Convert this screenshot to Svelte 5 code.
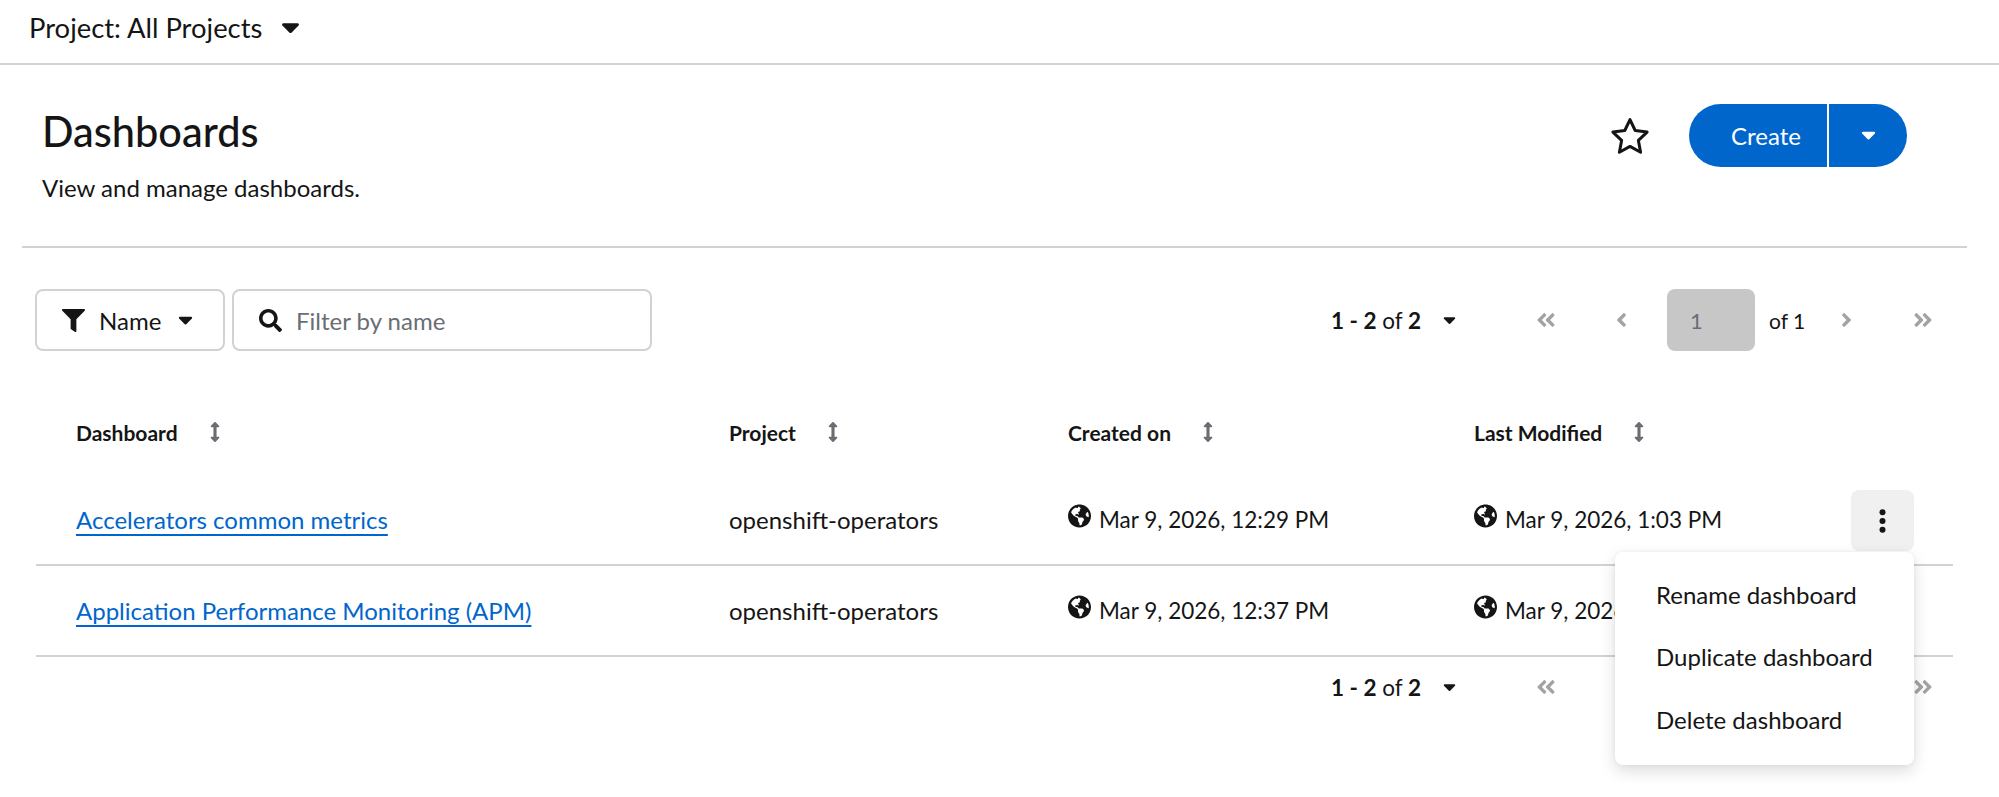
<script lang="ts">
  const globe = "M248 8C111.03 8 0 119.03 0 256s111.03 248 248 248 248-111.03 248-248S384.97 8 248 8zm82.29 357.6c-3.9 3.88-7.99 7.95-11.31 11.28-2.99 3-5.1 6.7-6.17 10.71-1.51 5.66-2.73 11.38-4.77 16.87l-17.39 46.85c-13.76 3-28 4.69-42.65 4.69v-27.38c1.69-12.62-7.64-36.26-22.63-51.25-6-6-9.37-14.14-9.37-22.63v-32.01c0-11.64-6.27-22.34-16.46-27.97-14.37-7.95-34.81-19.06-48.81-26.11-11.48-5.78-22.1-13.14-31.65-21.75l-.8-.72a114.792 114.792 0 0 1-18.06-20.74c-9.38-13.77-24.66-36.42-34.59-51.14 20.47-45.5 57.36-82.04 103.2-101.89l24.01 12.01C203.48 89.74 216 82.01 216 70.11v-11.3c7.99-1.29 16.12-2.11 24.45-2.42l28.3 28.3c6.25 6.25 6.25 16.38 0 22.63L264 112l-10.34 10.34c-3.12 3.12-3.12 8.19 0 11.31l4.69 4.69c3.12 3.12 3.12 8.19 0 11.31l-8 8a8.008 8.008 0 0 1-5.66 2.34h-8.99c-2.08 0-4.08.81-5.58 2.27l-9.92 9.65a8.008 8.008 0 0 0-1.58 9.31l15.59 31.19c2.66 5.32-1.21 11.58-7.15 11.58h-5.64c-1.93 0-3.79-.7-5.24-1.96l-9.28-8.06a16.017 16.017 0 0 0-15.55-3.1l-31.17 10.39a11.95 11.95 0 0 0-8.17 11.34c0 4.53 2.56 8.66 6.61 10.69l11.08 5.54c9.41 4.71 19.79 7.16 30.31 7.16s22.59 27.29 32 32h66.75c8.49 0 16.62 3.37 22.63 9.37l13.69 13.69a30.503 30.503 0 0 1 8.93 21.57 46.536 46.536 0 0 1-13.72 32.98zM417 274.25c-5.79-1.45-10.84-5-14.15-9.97l-17.98-26.97a23.97 23.97 0 0 1 0-26.62l19.59-29.38c2.32-3.47 5.5-6.29 9.24-8.15l12.98-6.49C440.2 193.59 448 223.87 448 256c0 8.67-.74 17.16-1.82 25.54L417 274.25z";
  const sortPath = "M214.059 377.941H168V134.059h46.059c21.382 0 32.09-25.851 16.971-40.971L144.971 7.029c-9.373-9.373-24.568-9.373-33.941 0L24.971 93.088c-15.119 15.119-4.411 40.971 16.971 40.971H88v243.882H41.941c-21.382 0-32.09 25.851-16.971 40.971l86.059 86.059c9.373 9.373 24.568 9.373 33.941 0l86.059-86.059c15.12-15.119 4.412-40.971-16.97-40.971z";
  const angle = "M31.7 239l136-136c9.4-9.4 24.6-9.4 33.9 0l22.6 22.6c9.4 9.4 9.4 24.6 0 33.9L127.9 256l96.4 96.4c9.4 9.4 9.4 24.6 0 33.9L201.7 409c-9.4 9.4-24.6 9.4-33.9 0l-136-136c-9.5-9.4-9.5-24.6-.1-34z";
  const angleDouble = "M223.7 239l136-136c9.4-9.4 24.6-9.4 33.9 0l22.6 22.6c9.4 9.4 9.4 24.6 0 33.9L319.9 256l96.4 96.4c9.4 9.4 9.4 24.6 0 33.9L393.7 409c-9.4 9.4-24.6 9.4-33.9 0l-136-136c-9.5-9.4-9.5-24.6-.1-34zm-192 34l136 136c9.4 9.4 24.6 9.4 33.9 0l22.6-22.6c9.4-9.4 9.4-24.6 0-33.9L127.9 256l96.4-96.4c9.4-9.4 9.4-24.6 0-33.9L201.7 103c-9.4-9.4-24.6-9.4-33.9 0l-136 136c-9.5 9.4-9.5 24.6-.1 34z";

  const columns = ["Dashboard", "Project", "Created on", "Last Modified"];
  const rows = [
    { name: "Accelerators common metrics", project: "openshift-operators", created: "Mar 9, 2026, 12:29 PM", modified: "Mar 9, 2026, 1:03 PM", menu: true },
    { name: "Application Performance Monitoring (APM)", project: "openshift-operators", created: "Mar 9, 2026, 12:37 PM", modified: "Mar 9, 2026, 1:03 PM", menu: false }
  ];
  const menuItems = ["Rename dashboard", "Duplicate dashboard", "Delete dashboard"];
</script>

{#snippet caret(cls)}
  <svg class="caret {cls}" viewBox="0 0 20 12"><path d="M2.5 1h15c1.2 0 1.8 1.4 1 2.3l-7.5 7.6c-.6.6-1.4.6-2 0L1.500 3.300C.7 2.400 1.300 1 2.500 1z" /></svg>
{/snippet}

{#snippet pagination(full)}
  <div class="pager">
    <span class="range"><b>1 - 2</b> of <b>2</b></span>
    {@render caret("caret-range")}
    <svg class="dbl first" viewBox="0 0 448 512"><path d={angleDouble} /></svg>
    <svg class="single prev" viewBox="0 0 256 512"><path d={angle} /></svg>
    {#if full}
      <span class="page-box">1</span>
      <span class="page-of">of 1</span>
    {:else}
      <span class="page-gap"></span>
    {/if}
    <svg class="single next flip" viewBox="0 0 256 512"><path d={angle} /></svg>
    <svg class="dbl last flip" viewBox="0 0 448 512"><path d={angleDouble} /></svg>
  </div>
{/snippet}

<div class="page">
  <header class="topbar">
    <span>Project: All Projects</span>
    {@render caret("caret-top")}
  </header>

  <section class="heading">
    <div>
      <h1>Dashboards</h1>
      <p>View and manage dashboards.</p>
    </div>
    <div class="actions">
      <svg class="star" viewBox="0 0 40 38"><path d="M20 2.600l5.200 10.900 11.900 1.600-8.700 8.300 2.200 11.800L20 29.400 9.400 35.200l2.200-11.800-8.700-8.300 11.900-1.600z" /></svg>
      <div class="create">
        <span class="create-main">Create</span>
        <span class="create-toggle">{@render caret("caret-white")}</span>
      </div>
    </div>
  </section>

  <div class="divider"></div>

  <div class="toolbar">
    <div class="filter-select">
      <svg class="icon-filter" viewBox="0 0 512 512"><path d="M487.976 0H24.028C2.71 0-8.047 25.866 7.058 40.971L192 225.941V432c0 7.831 3.821 15.17 10.237 19.662l80 55.98C298.02 518.69 320 507.493 320 487.98V225.941l184.947-184.97C520.021 25.896 509.338 0 487.976 0z" /></svg>
      <span>Name</span>
      {@render caret("caret-name")}
    </div>
    <div class="search">
      <svg class="icon-search" viewBox="0 0 512 512"><path d="M505 442.700L405.300 343c-4.500-4.500-10.600-7-17-7H372c27.600-35.300 44-79.700 44-128C416 93.100 322.900 0 208 0S0 93.100 0 208s93.100 208 208 208c48.300 0 92.700-16.400 128-44v16.300c0 6.400 2.500 12.500 7 17l99.700 99.700c9.400 9.400 24.600 9.400 33.900 0l28.300-28.300c9.400-9.400 9.400-24.600.1-34zM208 336c-70.700 0-128-57.200-128-128 0-70.700 57.200-128 128-128 70.700 0 128 57.200 128 128 0 70.700-57.200 128-128 128z" /></svg>
      <span>Filter by name</span>
    </div>
    {@render pagination(true)}
  </div>

  <div class="table">
    <div class="row head">
      {#each columns as col}
        <div class="th">
          <span>{col}</span>
          <svg class="sort" viewBox="0 0 256 512"><path d={sortPath} /></svg>
        </div>
      {/each}
    </div>
    {#each rows as row}
      <div class="row body">
        <a class="link" href="#top">{row.name}</a>
        <span>{row.project}</span>
        <span class="date"><svg class="globe" viewBox="0 0 496 512"><path d={globe} /></svg>{row.created}</span>
        <span class="date"><svg class="globe" viewBox="0 0 496 512"><path d={globe} /></svg>{row.modified}</span>
        {#if row.menu}
          <div class="kebab-cell">
            <div class="kebab">
              <svg viewBox="0 0 12 36"><circle cx="6" cy="5" r="4.500" /><circle cx="6" cy="18" r="4.500" /><circle cx="6" cy="31" r="4.500" /></svg>
            </div>
            <ul class="menu">
              {#each menuItems as item}
                <li>{item}</li>
              {/each}
            </ul>
          </div>
        {/if}
      </div>
    {/each}
  </div>

  <div class="bottom">
    {@render pagination(false)}
  </div>
</div>

<style>
  :global(body) {
    margin: 0;
    background: #fff;
  }
  .page {
    width: 1999px;
    height: 797px;
    overflow: hidden;
    font-family: "Lato", "Open Sans", sans-serif;
    font-size: 24px;
    color: #151515;
  }
  .topbar {
    height: 65px;
    box-sizing: border-box;
    border-bottom: 2px solid #d2d2d2;
    padding: 0 0 8px 29px;
    display: flex;
    align-items: center;
    font-size: 27.4px;
  }
  .caret { fill: currentColor; display: block; }
  .caret-top { width: 19px; height: 12px; margin-left: 19px; }
  .heading {
    height: 181px;
    display: flex;
    justify-content: space-between;
    padding: 0 92px 0 42px;
    box-sizing: border-box;
  }
  h1 {
    margin: 42px 0 0;
    font-size: 41.5px;
    line-height: 48px;
    font-weight: 500;
  }
  .heading p {
    margin: 18px 0 0;
    font-size: 24px;
    line-height: 30px;
  }
  .actions {
    display: flex;
    align-items: flex-start;
    margin-top: 39px;
  }
  .star {
    width: 40px;
    height: 38px;
    margin: 13px 39px 0 0;
    fill: none;
    stroke: #151515;
    stroke-width: 3;
    stroke-linejoin: round;
  }
  .create {
    width: 218px;
    height: 63px;
    display: flex;
    background: #0066cc;
    border-radius: 32px;
    color: #fff;
    font-size: 24px;
  }
  .create-main {
    flex: 1;
    display: flex;
    align-items: center;
    justify-content: center;
    padding-left: 16px;
    border-right: 2px solid #fff;
  }
  .create-toggle {
    width: 78px;
    display: flex;
    align-items: center;
    justify-content: center;
    box-sizing: border-box;
  }
  .caret-white { width: 15px; height: 9px; color: #fff; }
  .divider {
    height: 2px;
    background: #d2d2d2;
    margin: 0 32px 0 22px;
  }
  .toolbar {
    display: flex;
    align-items: center;
    margin: 41px 0 0 35px;
    height: 62px;
  }
  .filter-select, .search {
    height: 62px;
    box-sizing: border-box;
    border: 2px solid #d2d2d2;
    border-radius: 8px;
    display: flex;
    align-items: center;
    flex: none;
  }
  .filter-select {
    width: 190px;
    padding-left: 25px;
  }
  .icon-filter { width: 23px; height: 23px; fill: #151515; margin-right: 14px; }
  .caret-name { width: 15px; height: 9px; margin-left: 17px; }
  .search {
    width: 420px;
    margin-left: 7px;
    padding-left: 25px;
    color: #6a6e73;
  }
  .icon-search { width: 23px; height: 23px; fill: #151515; margin-right: 14px; }
  .pager {
    display: flex;
    align-items: center;
    margin-left: auto;
    width: 602px;
    flex: none;
    color: #151515;
    margin-right: 66px;
    box-sizing: border-box;
    font-size: 22px;
  }
  .range { width: 94px; flex: none; white-space: nowrap; font-size: 22.5px; }
  .range b { font-weight: 700; }
  .caret-range { width: 15px; height: 9px; margin-left: 18px; }
  .dbl { width: 20px; height: 22px; fill: #a3a3a3; flex: none; }
  .single { width: 11px; height: 22px; fill: #a3a3a3; flex: none; }
  .flip { transform: scaleX(-1); }
  .first { margin-left: 80px; }
  .prev { margin-left: 60px; }
  .page-box {
    width: 88px;
    height: 62px;
    flex: none;
    box-sizing: border-box;
    padding-left: 23px;
    margin-left: 40px;
    background: #c7c7c7;
    border-radius: 8px;
    display: flex;
    align-items: center;
    color: #6a6e73;
  }
  .page-of { margin-left: 14px; width: 37px; flex: none; white-space: nowrap; font-size: 21px; }
  .page-gap { width: 179px; flex: none; }
  .next { margin-left: 35px; }
  .last { margin-left: 61px; }
  .table {
    margin: 38px 46px 0 36px;
    position: relative;
  }
  .row {
    display: grid;
    grid-template-columns: 653px 339px 406px 1fr;
    padding-left: 40px;
    align-items: center;
  }
  .head {
    height: 86px;
    font-size: 21px;
    font-weight: 700;
  }
  .th { display: flex; align-items: center; gap: 32px; }
  .sort { width: 10px; height: 20px; fill: #6a6e73; }
  .body {
    height: 91px;
    box-sizing: border-box;
    border-bottom: 2px solid #d2d2d2;
    position: relative;
  }
  .link {
    color: #0066cc;
    text-decoration: underline;
    text-decoration-thickness: 2px;
    text-underline-offset: 5px;
    justify-self: start;
  }
  .date {
    display: flex;
    align-items: center;
    gap: 8px;
    font-size: 22.5px;
    white-space: nowrap;
  }
  .globe { width: 23px; height: 24px; fill: #151515; margin-bottom: 8px; flex: none; }
  .kebab-cell {
    position: absolute;
    right: 39px;
    top: 15px;
  }
  .kebab {
    width: 63px;
    height: 61px;
    background: #f0f0f0;
    border-radius: 8px;
    display: flex;
    align-items: center;
    justify-content: center;
  }
  .kebab svg { width: 9px; height: 24px; fill: #151515; }
  .menu {
    position: absolute;
    top: 62px;
    right: 0;
    width: 299px;
    box-sizing: border-box;
    height: 213px;
    margin: 0;
    padding: 11px 0 0 41px;
    list-style: none;
    background: #fff;
    border-radius: 8px;
    box-shadow: 0 6px 16px rgba(3, 3, 3, 0.14), 0 0 4px rgba(3, 3, 3, 0.05);
    z-index: 2;
  }
  .menu li {
    height: 62.5px;
    display: flex;
    align-items: center;
  }
  .bottom {
    display: flex;
    justify-content: flex-end;
    height: 60px;
    align-items: center;
  }
</style>
